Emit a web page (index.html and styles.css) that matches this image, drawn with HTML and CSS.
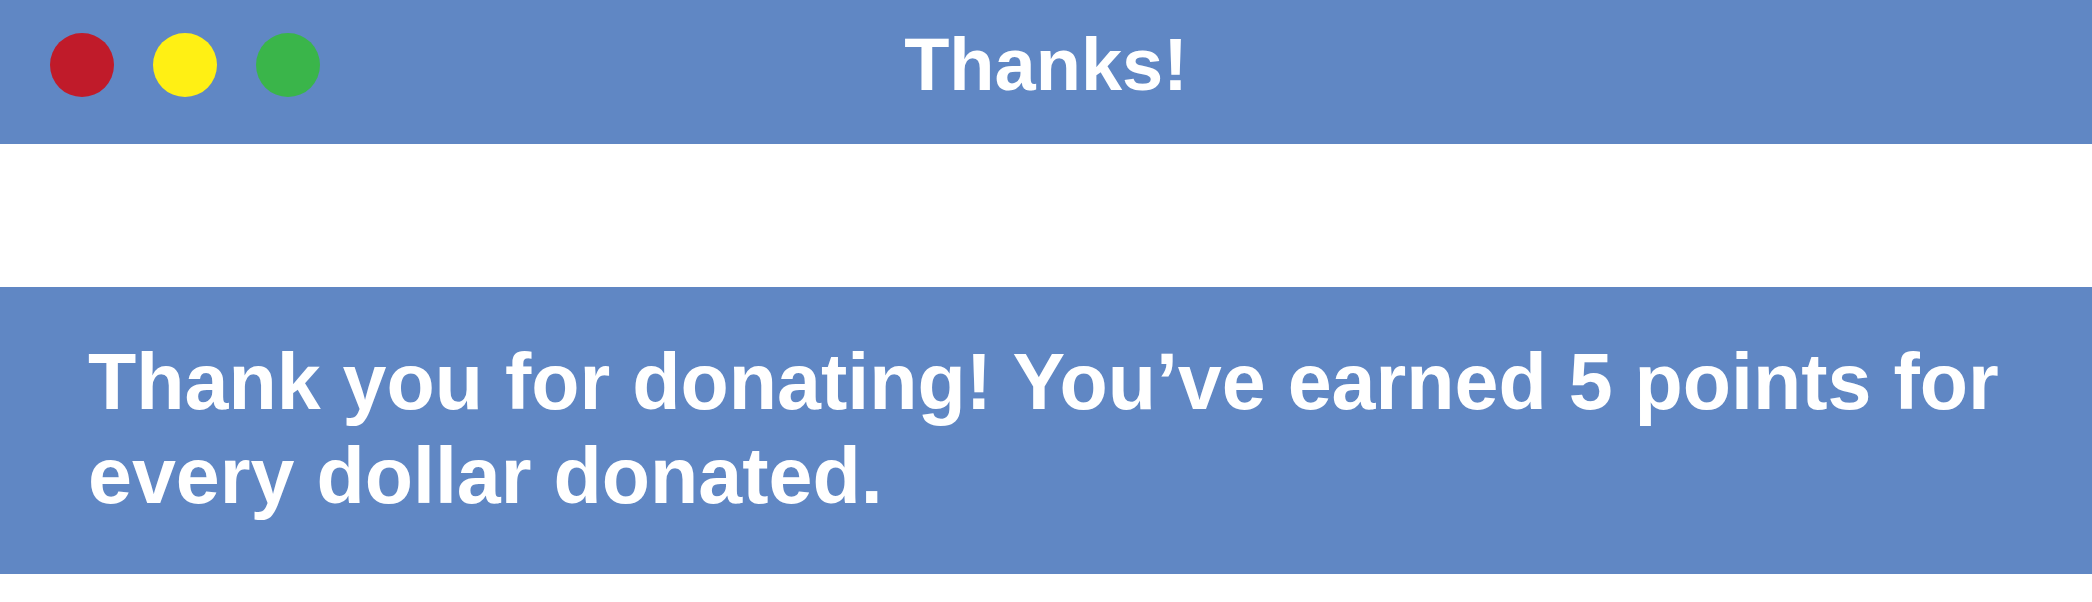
FILE: index.html
```html
<!DOCTYPE html>
<html lang="en">
<head>
<meta charset="utf-8">
<title>Thanks!</title>
<link rel="stylesheet" href="styles.css">
</head>
<body>
<div class="window">
  <header class="titlebar">
    <div class="lights">
      <span class="light light-red"></span>
      <span class="light light-yellow"></span>
      <span class="light light-green"></span>
    </div>
    <h1 class="title">Thanks!</h1>
  </header>
  <section class="message">
    <p class="message-text">Thank you for donating! You’ve earned 5 points for every dollar donated.</p>
  </section>
</div>
</body>
</html>
```
FILE: styles.css
```css
* { box-sizing: border-box; }
html, body {
  margin: 0;
  padding: 0;
  background: #ffffff;
  font-family: "Liberation Sans", Arial, sans-serif;
}
.window {
  width: 2092px;
  height: 602px;
  display: flex;
  flex-direction: column;
}
.titlebar {
  height: 144px;
  background: #6087c4;
  display: grid;
  grid-template-columns: 1fr auto 1fr;
  align-items: center;
  padding-bottom: 14px;
}
.lights {
  display: flex;
  gap: 39px;
  padding-left: 50px;
  align-items: center;
}
.light {
  width: 64px;
  height: 64px;
  border-radius: 50%;
  display: block;
}
.light-red { background: #c01b2a; }
.light-yellow { background: #fff014; }
.light-green { background: #3ab54a; }
.title {
  margin: 0;
  color: #ffffff;
  font-weight: 700;
  font-size: 74px;
  line-height: 1;
}
.message {
  margin-top: 143px;
  height: 287px;
  background: #6087c4;
  padding: 48px 40px 0 88px;
}
.message-text {
  margin: 0;
  color: #ffffff;
  font-weight: 700;
  font-size: 79px;
  line-height: 94px;
}
```
